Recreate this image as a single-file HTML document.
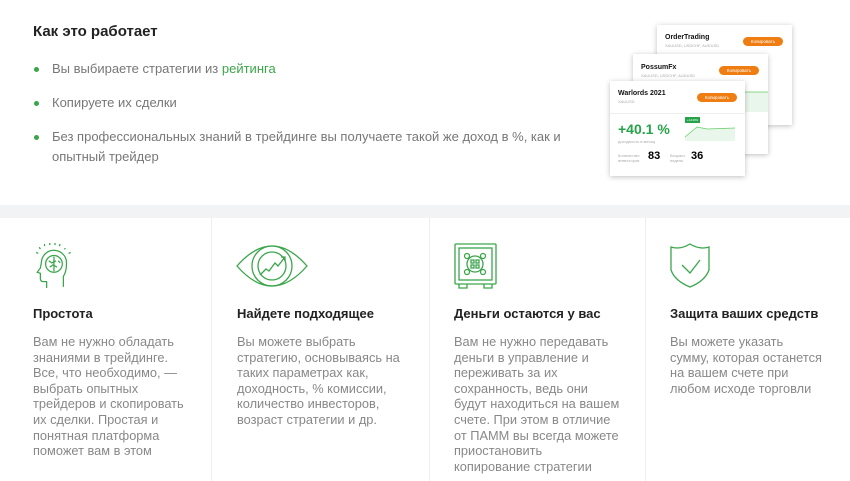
<!DOCTYPE html>
<html><head><meta charset="utf-8"><style>
*{margin:0;padding:0;box-sizing:border-box}
body{width:850px;height:481px;background:#fff;font-family:"Liberation Sans",sans-serif;position:relative;overflow:hidden}
h2{position:absolute;left:33px;top:23px;font-size:15px;font-weight:bold;color:#222}
.li{position:absolute;left:52px;font-size:13px;color:#777;line-height:20px}
.li:before{content:"";position:absolute;left:-18px;top:8px;width:5px;height:5px;border-radius:50%;background:#3aa64a}
.band{position:absolute;left:0;top:205px;width:850px;height:13px;background:#f2f3f5}
.col{position:absolute;top:218px;height:263px;border-right:1px solid #eee}
.col h3{position:absolute;top:88px;font-size:13px;font-weight:bold;color:#222}
.col p{position:absolute;top:116px;font-size:12.8px;line-height:15.6px;color:#888;white-space:nowrap}
.card{position:absolute;background:#fff;box-shadow:0 1px 5px rgba(0,0,0,.25);font-size:6px}
.card b{position:absolute;font-size:7px;color:#111}
.card .s{position:absolute;font-size:4px;color:#aaa}
.btn{position:absolute;background:#f07d11;color:#fff;border-radius:5px;font-size:4.5px;text-align:center;line-height:9px;width:40px;height:9px}
</style></head><body>
<h2>Как это работает</h2>
<div class="li" style="top:59px">Вы выбираете стратегии из <span style="color:#3aa64a">рейтинга</span></div>
<div class="li" style="top:93px">Копируете их сделки</div>
<div class="li" style="top:127px;width:520px">Без профессиональных знаний в трейдинге вы получаете такой же доход в %, как и опытный трейдер</div>

<div class="card" style="left:657px;top:25px;width:135px;height:100px"><b style="left:8px;top:9px">OrderTrading</b><div class="s" style="left:8px;top:18px">XAUUSD, USDCHF, AUDUSD</div><div class="btn" style="left:86px;top:12px">Копировать</div></div>
<div class="card" style="left:633px;top:54px;width:135px;height:100px"><b style="left:8px;top:10px">PossumFx</b><div class="s" style="left:8px;top:19px">XAUUSD, USDCHF, AUDUSD</div><div class="btn" style="left:86px;top:12px">Копировать</div>
<svg style="position:absolute;left:100px;top:28px" width="35" height="30"><path d="M0 10 L6 4 L10 10 L35 10 L35 30 L0 30Z" fill="#e9f6ec"/><path d="M0 10 L6 4 L10 10 L35 10" stroke="#6c6" fill="none" stroke-width=".7"/></svg></div>
<div class="card" style="left:610px;top:81px;width:135px;height:95px">
<b style="left:8px;top:9px">Warlords 2021</b><div class="s" style="left:8px;top:18px">XAUUSD</div><div class="btn" style="left:87px;top:12px">Копировать</div>
<div style="position:absolute;left:0;top:32px;width:135px;border-top:1px solid #eee"></div>
<div style="position:absolute;left:8px;top:40px;font-size:14px;color:#27a34a;font-weight:bold">+40.1 %</div>
<div class="s" style="left:8px;top:58px">доходность в месяц</div>
<div style="position:absolute;left:75px;top:36px;background:#27a34a;color:#fff;font-size:3px;padding:1px 2px">+1440%</div>
<svg style="position:absolute;left:75px;top:40px" width="50" height="20"><path d="M0 20 L0 16 L12 6 L22 8 L50 7 L50 20Z" fill="#e9f6ec"/><path d="M0 16 L12 6 L22 8 L50 7" stroke="#6c6" fill="none" stroke-width=".7"/></svg>
<div class="s" style="left:8px;top:72px;line-height:5px">Количество<br>инвесторов</div><div style="position:absolute;left:38px;top:69px;font-size:11px;font-weight:bold">83</div>
<div class="s" style="left:60px;top:72px;line-height:5px">Возраст,<br>недель</div><div style="position:absolute;left:81px;top:69px;font-size:11px;font-weight:bold">36</div>
</div>

<div class="band"></div>
<div class="col" style="left:0;width:212px">
<svg style="position:absolute;left:35px;top:25px" width="40" height="46" viewBox="0 0 36 44" fill="none" stroke="#3aa64a" stroke-width="1.2"><path d="M3 4l1 2M8 1v2M13 0v2M18 0v2M23 1l-1 2M28 5l-1 1M0 9l2 1M33 9l-2 1M29 20a12 12 0 0 0-24-2c0 3-1 4-1 6l-3 4 3 1v5c0 2 1 3 3 3h3v6M26 42V32c2-3 3-7 3-12"/><circle cx="17" cy="20" r="8"/><path d="M12 17l3 2 4-2M13 23l3-2 4 2M17 13v14M21 17l2 2"/></svg>
<h3 style="left:33px">Простота</h3>
<p style="left:33px">Вам не нужно обладать<br>знаниями в трейдинге.<br>Все, что необходимо, —<br>выбрать опытных<br>трейдеров и скопировать<br>их сделки. Простая и<br>понятная платформа<br>поможет вам в этом</p></div>
<div class="col" style="left:212px;width:218px">
<svg style="position:absolute;left:24px;top:26px" width="72" height="44" fill="none" stroke="#3aa64a" stroke-width="1.3"><path d="M1 22Q36 -18 71 22Q36 62 1 22Z"/><circle cx="36" cy="22" r="20"/><circle cx="36" cy="22" r="14"/><path d="M24 31l6-6 3 2 6-8 3 3 7-9M45 13h4v4"/></svg>
<h3 style="left:25px">Найдете подходящее</h3>
<p style="left:25px">Вы можете выбрать<br>стратегию, основываясь на<br>таких параметрах как,<br>доходность, % комиссии,<br>количество инвесторов,<br>возраст стратегии и др.</p></div>
<div class="col" style="left:430px;width:216px">
<svg style="position:absolute;left:24px;top:25px" width="44" height="46" fill="none" stroke="#3aa64a" stroke-width="1.3"><rect x="1" y="1" width="41" height="40" rx="1"/><rect x="5" y="5" width="33" height="32"/><circle cx="21" cy="21" r="8"/><circle cx="13" cy="13" r="2.5"/><circle cx="29" cy="13" r="2.5"/><circle cx="13" cy="29" r="2.5"/><circle cx="29" cy="29" r="2.5"/><rect x="17" y="17" width="3" height="3"/><rect x="22" y="17" width="3" height="3"/><rect x="17" y="22" width="3" height="3"/><rect x="22" y="22" width="3" height="3"/><path d="M5 41v4h8v-4M30 41v4h8v-4"/></svg>
<h3 style="left:24px">Деньги остаются у вас</h3>
<p style="left:24px">Вам не нужно передавать<br>деньги в управление и<br>переживать за их<br>сохранность, ведь они<br>будут находиться на вашем<br>счете. При этом в отличие<br>от ПАММ вы всегда можете<br>приостановить<br>копирование стратегии</p></div>
<div class="col" style="left:646px;width:204px;border:none">
<svg style="position:absolute;left:24px;top:25px" width="42" height="46" fill="none" stroke="#3aa64a" stroke-width="1.3"><path d="M1 4Q10 7 20 1Q30 7 39 4V27Q35 38 20 44Q5 38 1 27Z"/><path d="M12 22l8 8 10-13"/></svg>
<h3 style="left:24px">Защита ваших средств</h3>
<p style="left:24px">Вы можете указать<br>сумму, которая останется<br>на вашем счете при<br>любом исходе торговли</p></div>
</body></html>
